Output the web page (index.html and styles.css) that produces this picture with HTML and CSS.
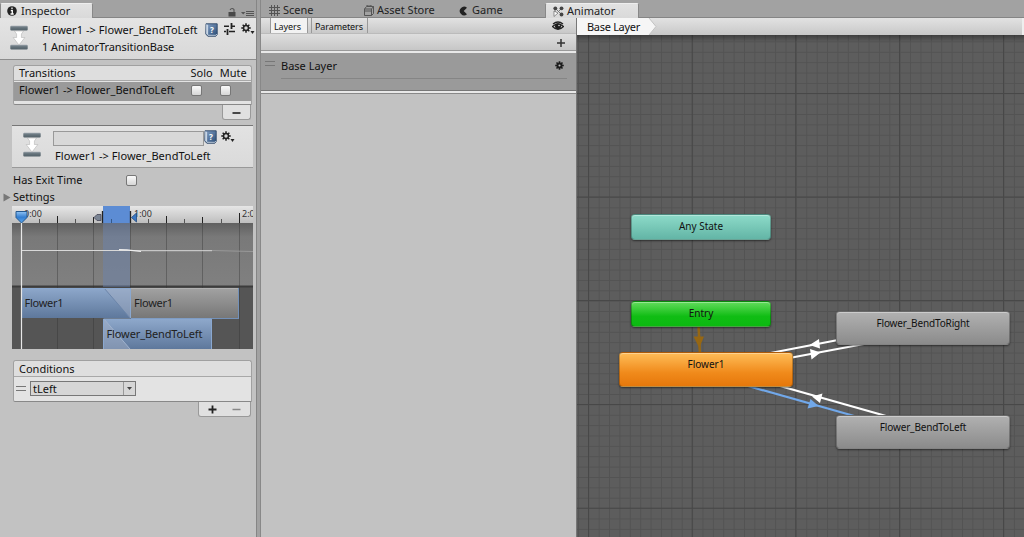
FILE: index.html
```
<!DOCTYPE html>
<html lang="en">
<head>
    <meta charset="UTF-8">
    <title>Animator</title>
    <link rel="stylesheet" href="styles.css">
</head>
<body>

<!-- shared icons -->
<svg class="defs" width="0" height="0">
    <defs>
        <linearGradient id="bar-fill" x1="0" y1="0" x2="0" y2="1">
            <stop offset="0" stop-color="#99a2aa"/>
            <stop offset=".4" stop-color="#65737b"/>
            <stop offset="1" stop-color="#536169"/>
        </linearGradient>
        <linearGradient id="book-fill" x1="0" y1="0" x2="1" y2="1">
            <stop offset="0" stop-color="#86a2c6"/>
            <stop offset="1" stop-color="#284b75"/>
        </linearGradient>
        <symbol id="transition" viewBox="0 0 18 26">
            <rect x=".3" y=".8" width="17.4" height="4.800" rx="1" fill="url(#bar-fill)"/>
            <rect x=".3" y="19.8" width="17.4" height="4.800" rx="1" fill="url(#bar-fill)"/>
            <path d="M4.500 6h9L11.400 9v3.500h3.400L9 20 3.200 12.500h3.400V9z" fill="#fff" stroke="#aaa" stroke-width=".5"/>
        </symbol>
        <symbol id="book" viewBox="0 0 13 14">
            <path d="M1 .8h11.200v10.500l-1.400 1.900H2.800L.8 11z" fill="url(#book-fill)" stroke="#2c4667" stroke-width=".9"/>
            <path d="M1.200 1.300v9.500l1.900 1.700V2z" fill="#c8d5e4"/>
            <path d="M3 12.300h7.800l1-1.300" fill="none" stroke="#dce4ed" stroke-width=".8"/>
            <text x="5" y="9.800" class="book-mark">?</text>
        </symbol>
        <symbol id="gear" viewBox="0 0 12 12">
            <g stroke="#222" stroke-width="1.800">
                <path d="M6 .3v11.400M.3 6h11.400M2 2l8 8M10 2l-8 8"/>
            </g>
            <circle cx="6" cy="6" r="3.800" fill="#222"/>
            <circle cx="6" cy="6" r="2.100" fill="#d8d8d8"/>
        </symbol>
    </defs>
</svg>

<div class="editor">
    <aside class="inspector">
        <div class="tab-bar">
            <div class="tab active inspector-tab">
                <svg width="10" height="10" viewBox="0 0 10 10"><circle cx="5" cy="5" r="4.800" fill="#222"/><path d="M5 1.500v1.700M3.800 4.600h1.500V8M3.500 8h3.200" stroke="#fff" stroke-width="1.300" fill="none"/></svg>
                <span>Inspector</span>
            </div>
            <div class="tab-tools">
                <svg width="8" height="9" viewBox="0 0 8 9"><path d="M2 1.800Q4-.6 6 1.600V5" fill="none" stroke="#555" stroke-width="1.100"/><rect x=".5" y="4" width="7" height="4.500" fill="#484848"/></svg>
                <svg width="13" height="7" viewBox="0 0 13 7"><path d="M0 2h4.400L2.200 4.500z" fill="#555"/><path d="M5 1.500h8M5 3.500h8M5 5.500h8" stroke="#555"/></svg>
            </div>
        </div>

        <div class="panel-header">
            <svg class="transition-icon" width="18" height="26"><use href="#transition"/></svg>
            <div class="panel-title">
                <div>Flower1 -&gt; Flower_BendToLeft</div>
                <div class="sub">1 AnimatorTransitionBase</div>
            </div>
            <div class="panel-tools">
                <svg width="13" height="14"><use href="#book"/></svg>
                <svg width="11" height="12" viewBox="0 0 11 12"><path d="M0 3.200h5M8 3.200h3M0 8.500h2M5 8.500h6" stroke="#222" stroke-width="1.400"/><path d="M7.500 0v6M3.500 6v6" stroke="#222" stroke-width="1.800"/></svg>
                <svg width="14" height="12" viewBox="0 0 14 12"><use href="#gear" width="10" height="10"/><path d="M9.500 8h4l-2 3z" fill="#222"/></svg>
            </div>
        </div>

        <div class="list transitions">
            <div class="list-head"><span>Transitions</span><span class="solo">Solo</span><span class="mute">Mute</span></div>
            <div class="list-row selected">
                <span>Flower1 -&gt; Flower_BendToLeft</span>
                <i class="check"></i>
                <i class="check"></i>
            </div>
        </div>
        <div class="list-foot one">
            <svg width="9" height="9" viewBox="0 0 9 9"><path d="M.5 5h8" stroke="#222" stroke-width="1.600"/></svg>
        </div>

        <div class="sub-header">
            <svg class="transition-icon" width="18" height="26"><use href="#transition"/></svg>
            <div class="sub-main">
                <div class="name-line">
                    <div class="name-field"></div>
                    <svg width="13" height="14"><use href="#book"/></svg>
                    <svg class="name-gear" width="14" height="12" viewBox="0 0 14 12"><use href="#gear" width="10" height="10"/><path d="M9.500 8h4l-2 3z" fill="#222"/></svg>
                </div>
                <div class="name-label">Flower1 -&gt; Flower_BendToLeft</div>
            </div>
        </div>

        <div class="property"><span>Has Exit Time</span><i class="check"></i></div>
        <div class="foldout">
            <svg width="8" height="9" viewBox="0 0 8 9"><path d="M.5.5v8l7-4z" fill="#777"/></svg>
            <span>Settings</span>
        </div>

        <svg class="timeline" width="241" height="143" viewBox="12 206 241 143">
            <defs>
                <linearGradient id="ruler" x1="0" y1="0" x2="0" y2="1"><stop offset="0" stop-color="#e6e6e6"/><stop offset="1" stop-color="#bebebe"/></linearGradient>
                <linearGradient id="curve" x1="0" y1="0" x2="0" y2="1"><stop offset="0" stop-color="#606060"/><stop offset=".22" stop-color="#797979"/><stop offset="1" stop-color="#808080"/></linearGradient>
                <linearGradient id="blue" x1="0" y1="0" x2="0" y2="1"><stop offset="0" stop-color="#8ea8cb"/><stop offset="1" stop-color="#5e789c"/></linearGradient>
                <linearGradient id="gray" x1="0" y1="0" x2="0" y2="1"><stop offset="0" stop-color="#a2a2a2"/><stop offset="1" stop-color="#777"/></linearGradient>
                <linearGradient id="head" x1="0" y1="0" x2="0" y2="1"><stop offset="0" stop-color="#8fc3f5"/><stop offset=".5" stop-color="#347ed0"/><stop offset="1" stop-color="#58a5ec"/></linearGradient>
            </defs>
            <rect x="12" y="206" width="241" height="17" fill="url(#ruler)"/>
            <rect x="12" y="223" width="241" height="63" fill="url(#curve)"/>
            <rect x="12" y="286" width="241" height="63" fill="#555"/>
            <path d="M12 286.500h241" stroke="#3c3c3c" stroke-width="2"/>
            <path d="M57.500 223v126M93.500 223v126M130.500 223v126M166.500 223v126M202.500 223v126M239.500 223v126" stroke="#333" stroke-opacity=".38"/>
            <path d="M57.500 216v7M93.500 217v6M130.500 212v11M166.500 216v7M202.500 217v6M239.500 213v10" stroke="#222"/>
            <path d="M39.500 219v4M75.500 219v4M148.500 219v4M184.500 219v4M221.500 219v4" stroke="#555"/>
            <text x="24" y="217" class="tick">0:00</text>
            <text x="134" y="217" class="tick">1:00</text>
            <text x="242" y="217" class="tick">2:0</text>

            <rect x="103" y="223" width="27" height="64" fill="#6a86b4" fill-opacity=".45"/>
            <path d="M22 250.500h110l10 .2h70" stroke="#d8d8d8" fill="none"/>
            <path d="M119 249.700l8 .2 14 1.600" stroke="#eee" stroke-width="1.200" fill="none"/>
            <path d="M212 250.500l20 .5 21 .5" stroke="#999" fill="none"/>

            <rect x="22" y="288" width="108" height="30" fill="url(#blue)"/>
            <path d="M104 288h26v30z" fill="#a3b0c5" fill-opacity=".5"/>
            <path d="M104 288l26 30" stroke="#6c85aa" fill="none"/>
            <path d="M22 288.500h108M130.500 288v30" stroke="#8aa8d0" fill="none"/>
            <rect x="131" y="288" width="108" height="30" fill="url(#gray)"/>
            <path d="M131 288.500h108" stroke="#b1b1b1"/>
            <path d="M238.500 288v30M131 318.500h108" stroke="#7290b8"/>
            <rect x="103" y="319" width="108" height="30" fill="url(#blue)"/>
            <path d="M104 319l26 30h-27z" fill="#a3b0c5" fill-opacity=".5"/>
            <path d="M104 319l26 30" stroke="#a0b2cd" fill="none"/>
            <path d="M103.500 349v-30h108v30" stroke="#8aa8d0" fill="none"/>
            <text x="24.500" y="307" class="clip-text" textLength="39">Flower1</text>
            <text x="134" y="307" class="clip-text" textLength="39">Flower1</text>
            <text x="106.500" y="338" class="clip-text" textLength="96">Flower_BendToLeft</text>

            <rect x="103" y="206" width="27" height="17" fill="#5c8cd4"/>
            <path d="M102.500 211v12M130.500 211v12" stroke="#222" stroke-width="1.300"/>
            <path d="M111.500 219v4" stroke="#355989"/>
            <path d="M94 217.500l3-3h4v6h-4z" fill="#7a8493" stroke="#445" stroke-width=".8"/>
            <path d="M136.500 213v9l-5-4.500z" fill="#3978c5" stroke="#244a7b" stroke-width=".8"/>
            <path d="M21.500 220v129" stroke="#e8e8e8" stroke-width="1.200"/>
            <path d="M16 211.500h11v6l-5.500 5.500-5.500-5.500z" fill="url(#head)" stroke="#24588f" stroke-linejoin="round"/>
        </svg>

        <div class="list conditions">
            <div class="list-head"><span>Conditions</span></div>
            <div class="list-row">
                <i class="grip"></i>
                <div class="select">
                    <span>tLeft</span>
                    <b><svg width="5" height="3" viewBox="0 0 5 3"><path d="M0 0h5L2.500 3z" fill="#444"/></svg></b>
                </div>
            </div>
        </div>
        <div class="list-foot two">
            <svg width="9" height="9" viewBox="0 0 9 9"><path d="M.5 4.500h8M4.500.5v8" stroke="#222" stroke-width="1.800"/></svg>
            <svg width="9" height="9" viewBox="0 0 9 9"><path d="M.5 4.500h8" stroke="#888" stroke-width="1.500"/></svg>
        </div>
    </aside>

    <div class="splitter"></div>

    <main class="workspace">
        <div class="tab-bar">
            <div class="tab scene">
                <svg width="11" height="11" viewBox="0 0 11 11"><path d="M2.500 0v11M5.500 0v11M8.500 0v11M0 2.500h11M0 5.500h11M0 8.500h11" stroke="#555"/></svg>
                <span>Scene</span>
            </div>
            <div class="tab store">
                <svg width="10" height="11" viewBox="0 0 10 11"><path d="M.5 4h7v6.500h-7zM.5 4L2.500 1.500h7L7.500 4M9.500 1.500v7l-2 2M.5 6h7M3 1V0h4v1" fill="none" stroke="#555"/></svg>
                <span>Asset Store</span>
            </div>
            <div class="tab game">
                <svg width="9" height="10" viewBox="0 0 9 10"><path d="M8 1.800A4.300 4.300 0 1 0 8 8.200L4.700 5z" fill="#222"/></svg>
                <span>Game</span>
            </div>
            <div class="tab active animator">
                <svg width="11" height="11" viewBox="0 0 11 11"><path d="M2 2l7 7M9 2L6 5M2 3v5" stroke="#777"/><g fill="#444"><circle cx="2.300" cy="2.300" r="1.900"/><circle cx="8.500" cy="2.300" r="1.900"/><circle cx="8.500" cy="8.500" r="1.900"/></g><path d="M1 5v5.500l4-3.500z" fill="#fff" stroke="#666" stroke-width=".7"/></svg>
                <span>Animator</span>
            </div>
        </div>

        <div class="work-area">
            <section class="layers">
                <div class="layers-toolbar">
                    <div class="mini-tab on">Layers</div>
                    <div class="mini-tab">Parameters</div>
                    <svg class="eye" width="12" height="10" viewBox="0 0 12 10"><path d="M.5 5.500Q6 .5 11.500 5.500 6 11 .5 5.500z" fill="#ccc" stroke="#222" stroke-width="1.300"/><circle cx="6" cy="5.300" r="3" fill="#1c1c1c"/><circle cx="7" cy="4.500" r=".8" fill="#ddd"/><path d="M1 3Q6-1 11 3" stroke="#222" stroke-width="1.300" fill="none"/></svg>
                </div>
                <div class="layers-add">
                    <svg width="8" height="8" viewBox="0 0 8 8"><path d="M0 4h8M4 0v8" stroke="#333" stroke-width="1.500"/></svg>
                </div>
                <div class="layer">
                    <i class="grip"></i>
                    <div class="layer-body">
                        <div class="layer-name"><span>Base Layer</span>
                            <svg width="9" height="9" viewBox="0 0 12 12"><path d="M6 .3v11.400M.3 6h11.400M2 2l8 8M10 2l-8 8" stroke="#1c1c1c" stroke-width="2.200"/><circle cx="6" cy="6" r="4" fill="#1c1c1c"/><circle cx="6" cy="6" r="1.400" fill="#bbb"/></svg>
                        </div>
                        <div class="layer-weight"></div>
                    </div>
                </div>
                <div class="layer-end"></div>
            </section>

            <section class="graph">
                <div class="breadcrumb">
                    <svg width="80" height="17" viewBox="0 0 80 17"><path d="M0 0h72l7 8.500-7 8.500H0z" fill="#f6f6f6"/><path d="M72 0l7 8.500-7 8.500" fill="none" stroke="#c2c2c2"/></svg>
                    <span>Base Layer</span>
                </div>
                <div class="canvas">
                    <svg class="wires" width="447" height="502" viewBox="577 35 447 502">
                        <defs>
                            <pattern id="minor" x="588.300" y="93.300" width="10.380" height="10.370" patternUnits="userSpaceOnUse"><path d="M0 .5h10.380M.5 0v10.370" stroke="#535353"/></pattern>
                            <linearGradient id="shade" x1="0" y1="0" x2="0" y2="1"><stop offset="0" stop-color="#000" stop-opacity=".32"/><stop offset="1" stop-color="#000" stop-opacity="0"/></linearGradient>
                        </defs>
                        <rect x="577" y="35" width="447" height="502" fill="url(#minor)"/>
                        <path d="M588.500 35v502M692.200 35v502M795.700 35v502M899.500 35v502M1003.500 35v502M577 93.500h447M577 197h447M577 300.500h447M577 404.500h447M577 508.200h447" stroke="#484848"/>
                        <rect x="577" y="35" width="447" height="7" fill="url(#shade)"/>
                        <path d="M698.500 325l1.500 30" stroke="#966714" stroke-width="2.500"/>
                        <path d="M693.500 336.500h10.500L699.300 348z" fill="#966714"/>
                        <g stroke="#fff" stroke-width="2.200">
                            <path d="M768 353.500l70-13.500M792 357.500l72-13.500"/>
                            <path d="M780 386l106 30"/>
                        </g>
                        <path d="M748 386l108 30.500" stroke="#71a8ea" stroke-width="2.200"/>
                        <path d="M809.500 345l9.500-6 1 9.500zM820.500 352.500l-10.500-3.500 1.500 10.500zM812 396.500l10.500-3-2.500 9.500z" fill="#fff"/>
                        <path d="M818.500 406l-8-7-3 9.500z" fill="#71a8ea"/>
                    </svg>
                    <div class="node small any-state">Any State</div>
                    <div class="node small entry">Entry</div>
                    <div class="node flower">Flower1</div>
                    <div class="node state bend-right">Flower_BendToRight</div>
                    <div class="node state bend-left">Flower_BendToLeft</div>
                </div>
            </section>
        </div>
    </main>
</div>

</body>
</html>
```
FILE: styles.css
```
* {
    box-sizing: border-box;
}
body {
    margin: 0;
    width: 1024px;
    height: 537px;
    overflow: hidden;
    font-family: "Noto Sans", "Open Sans", sans-serif;
    font-size: 11px;
    line-height: 14px;
    color: #111;
    background: #c2c2c2;
}
svg {
    display: block;
    flex: none;
}
span, .node, .panel-title, .name-label {
    white-space: nowrap;
}
.defs {
    position: absolute;
}
.book-mark {
    font-size: 8px;
    font-weight: bold;
    fill: #fff;
}
.editor {
    display: flex;
    height: 537px;
}

/* tabs */
.tab-bar {
    display: flex;
    height: 18px;
    padding-top: 3px;
    background: #a2a2a2;
    border-bottom: 1px solid #858585;
}
.tab {
    display: flex;
    align-items: center;
    gap: 4px;
    height: 15px;
    color: #222;
}
.tab span {
    margin-top: -1px;
}
.tab.active {
    background: linear-gradient(#e2e2e2, #d9d9d9);
    border: 1px solid #888;
    border-top-color: #eee;
    border-bottom: 0;
    border-radius: 2px 2px 0 0;
}

/* inspector */
.inspector {
    width: 257px;
    border-right: 1px solid #858585;
}
.inspector-tab {
    width: 93px;
    padding-left: 6px;
}
.tab-tools {
    display: flex;
    align-items: flex-end;
    gap: 5px;
    margin-left: 135px;
    padding-bottom: 0;
}
.panel-header {
    display: flex;
    height: 42px;
    padding: 5px 0 0 10px;
    background: linear-gradient(#e4e4e4, #d8d8d8);
    border-bottom: 1px solid #8c8c8c;
}
.transition-icon {
    margin-top: 2px;
}
.panel-title {
    width: 163px;
    margin-left: 14px;
    letter-spacing: .05px;
}
.panel-title .sub {
    margin-top: 3px;
    letter-spacing: -.05px;
}
.panel-tools {
    display: flex;
    gap: 6px;
}
.list {
    width: 239px;
    margin-left: 13px;
    background: #e3e3e3;
    border: 1px solid #a0a0a0;
    border-bottom-color: #888;
    border-radius: 3px 3px 0 2px;
}
.list-head {
    display: flex;
    height: 16px;
    padding-left: 5px;
    border-bottom: 1px solid #a8a8a8;
    background: #dedede;
    border-radius: 3px 3px 0 0;
    line-height: 13px;
}
.transitions {
    height: 40px;
    margin-top: 5px;
}
.transitions .list-head {
    height: 15px;
}
.list-head .solo {
    margin-left: 115px;
}
.list-head .mute {
    margin-left: 7px;
}
.list-row {
    display: flex;
    align-items: center;
}
.list-row.selected {
    height: 19px;
    margin-top: 1px;
    padding-left: 5px;
    background: #9a9a9a;
    letter-spacing: .05px;
}
.list-row.selected > * {
    margin-top: -3px;
}
.list-row.selected span {
    width: 172px;
}
.list-row.selected .check + .check {
    margin-left: 18px;
}
.check {
    width: 11px;
    height: 11px;
    border: 1px solid #777;
    border-radius: 2px;
    background: linear-gradient(#fafafa, #d6d6d6);
}
.list-foot {
    display: flex;
    align-items: center;
    justify-content: center;
    height: 15px;
    margin-left: auto;
    margin-right: 5px;
    background: #e0e0e0;
    border: 1px solid #999;
    border-top: 0;
    border-radius: 0 0 3px 3px;
}
.one {
    width: 29px;
}
.two {
    width: 53px;
    gap: 15px;
}
.sub-header {
    display: flex;
    width: 241px;
    height: 43px;
    margin: 5px 0 0 12px;
    padding: 4px 0 0 11px;
    background: linear-gradient(#e2e2e2, #dadada);
    border-top: 1px solid #777;
    border-bottom: 1px solid #999;
}
.sub-main {
    margin-left: 12px;
}
.name-line {
    display: flex;
}
.name-field {
    width: 151px;
    height: 15px;
    margin-top: 1px;
    border: 1px solid #999;
    background: #d8d8d8;
}
.name-gear {
    margin: 1px 0 0 4px;
}
.name-label {
    margin: 3px 0 0 2px;
    letter-spacing: .05px;
}
.property {
    display: flex;
    align-items: center;
    height: 24px;
    padding-left: 13px;
}
.property span {
    width: 113px;
}
.foldout {
    display: flex;
    align-items: center;
    gap: 2px;
    height: 10px;
    padding-left: 3px;
}
.timeline {
    margin: 4px 0 0 12px;
}
.tick {
    font-size: 9px;
    fill: #333;
}
.clip-text {
    font-size: 11px;
    fill: #222;
}
.conditions {
    height: 42px;
    margin-top: 11px;
}
.conditions .list-head {
    line-height: 15px;
}
.conditions .list-row {
    height: 22px;
    padding-left: 2px;
}
.grip {
    width: 10px;
    height: 5px;
    border-top: 1px solid #777;
    border-bottom: 1px solid #777;
}
.select {
    display: flex;
    width: 106px;
    height: 15px;
    margin-left: 4px;
    border: 1px solid #777;
    background: #d6d6d6;
    line-height: 13px;
}
.select span {
    flex: 1;
    padding-left: 2px;
}
.select b {
    display: flex;
    align-items: center;
    justify-content: center;
    width: 12px;
    border-left: 1px solid #999;
}
.splitter {
    width: 4px;
    background: #a2a2a2;
    border-right: 1px solid #888;
}

/* workspace */
.workspace {
    width: 763px;
}
.scene {
    width: 95px;
    padding-left: 8px;
    gap: 3px;
}
.store {
    width: 95px;
    padding-left: 8px;
    gap: 3px;
}
.game {
    width: 94px;
    padding-left: 8px;
}
.animator {
    width: 94px;
    padding-left: 7px;
    gap: 3px;
}
.work-area {
    display: flex;
    height: 519px;
}
.layers {
    width: 316px;
    border-right: 1px solid #777;
}
.layers-toolbar {
    display: flex;
    height: 16px;
    padding-left: 9px;
    background: linear-gradient(#e2e2e2, #c8c8c8);
    border-bottom: 1px solid #bbb;
    font-size: 9px;
    line-height: 18px;
}
.mini-tab {
    width: 57px;
    margin-left: 3px;
    padding-left: 3px;
    border-left: 1px solid #999;
    border-right: 1px solid #999;
    letter-spacing: -.1px;
}
.mini-tab.on {
    width: 38px;
    margin-left: 0;
    background: #f2f2f2;
}
.eye {
    margin: 3px 0 0 184px;
}
.layers-add {
    height: 17px;
    padding: 5px 0 0 296px;
    background: linear-gradient(#dedede, #c6c6c6);
    border-bottom: 1px solid #999;
}
.layer {
    display: flex;
    height: 39px;
    padding: 8px 9px 0 4px;
    background: #9a9a9a;
    border-top: 2px solid #e8e8e8;
}
.layer-body {
    width: 286px;
    margin-left: 6px;
}
.layer-name {
    display: flex;
    align-items: center;
    justify-content: space-between;
    height: 9px;
    padding-right: 3px;
}
.layer-weight {
    height: 1px;
    margin-top: 8px;
    background: #858585;
}
.layer-end {
    height: 4px;
    background: #e8e8e8;
    border-top: 1px solid #777;
    border-bottom: 1px solid #888;
}

/* state graph */
.graph {
    width: 447px;
}
.breadcrumb {
    display: grid;
    height: 17px;
    background: linear-gradient(#e2e2e2, #c8c8c8);
    border-right: 2px solid #eee;
}
.breadcrumb > * {
    grid-area: 1 / 1;
}
.breadcrumb span {
    padding: 2px 0 0 10px;
    letter-spacing: -.3px;
}
.canvas {
    position: relative;
    height: 502px;
    background: #5d5d5d;
    overflow: hidden;
}
.node {
    position: absolute;
    width: 174px;
    height: 34px;
    padding-top: 4px;
    border: 1px solid rgba(0, 0, 0, .25);
    border-radius: 4px;
    box-shadow: inset 0 1px rgba(255, 255, 255, .35), 0 1px 2px rgba(0, 0, 0, .5);
    text-align: center;
    font-size: 10px;
}
.small {
    left: 54px;
    width: 140px;
    height: 26px;
}
.any-state {
    top: 179px;
    background: linear-gradient(#8ddbc9, #63b5a6);
}
.entry {
    top: 266px;
    background: linear-gradient(#62db5c, #10bd14 60%, #0cb911);
}
.flower {
    left: 42px;
    top: 317px;
    height: 35px;
    background: linear-gradient(#ffbd58, #f08a1b 60%, #e6780b);
}
.state {
    left: 259px;
    background: linear-gradient(#b1b1b1, #8b8b8b);
    letter-spacing: -.15px;
}
.bend-right {
    top: 276px;
}
.bend-left {
    top: 380px;
}
```
